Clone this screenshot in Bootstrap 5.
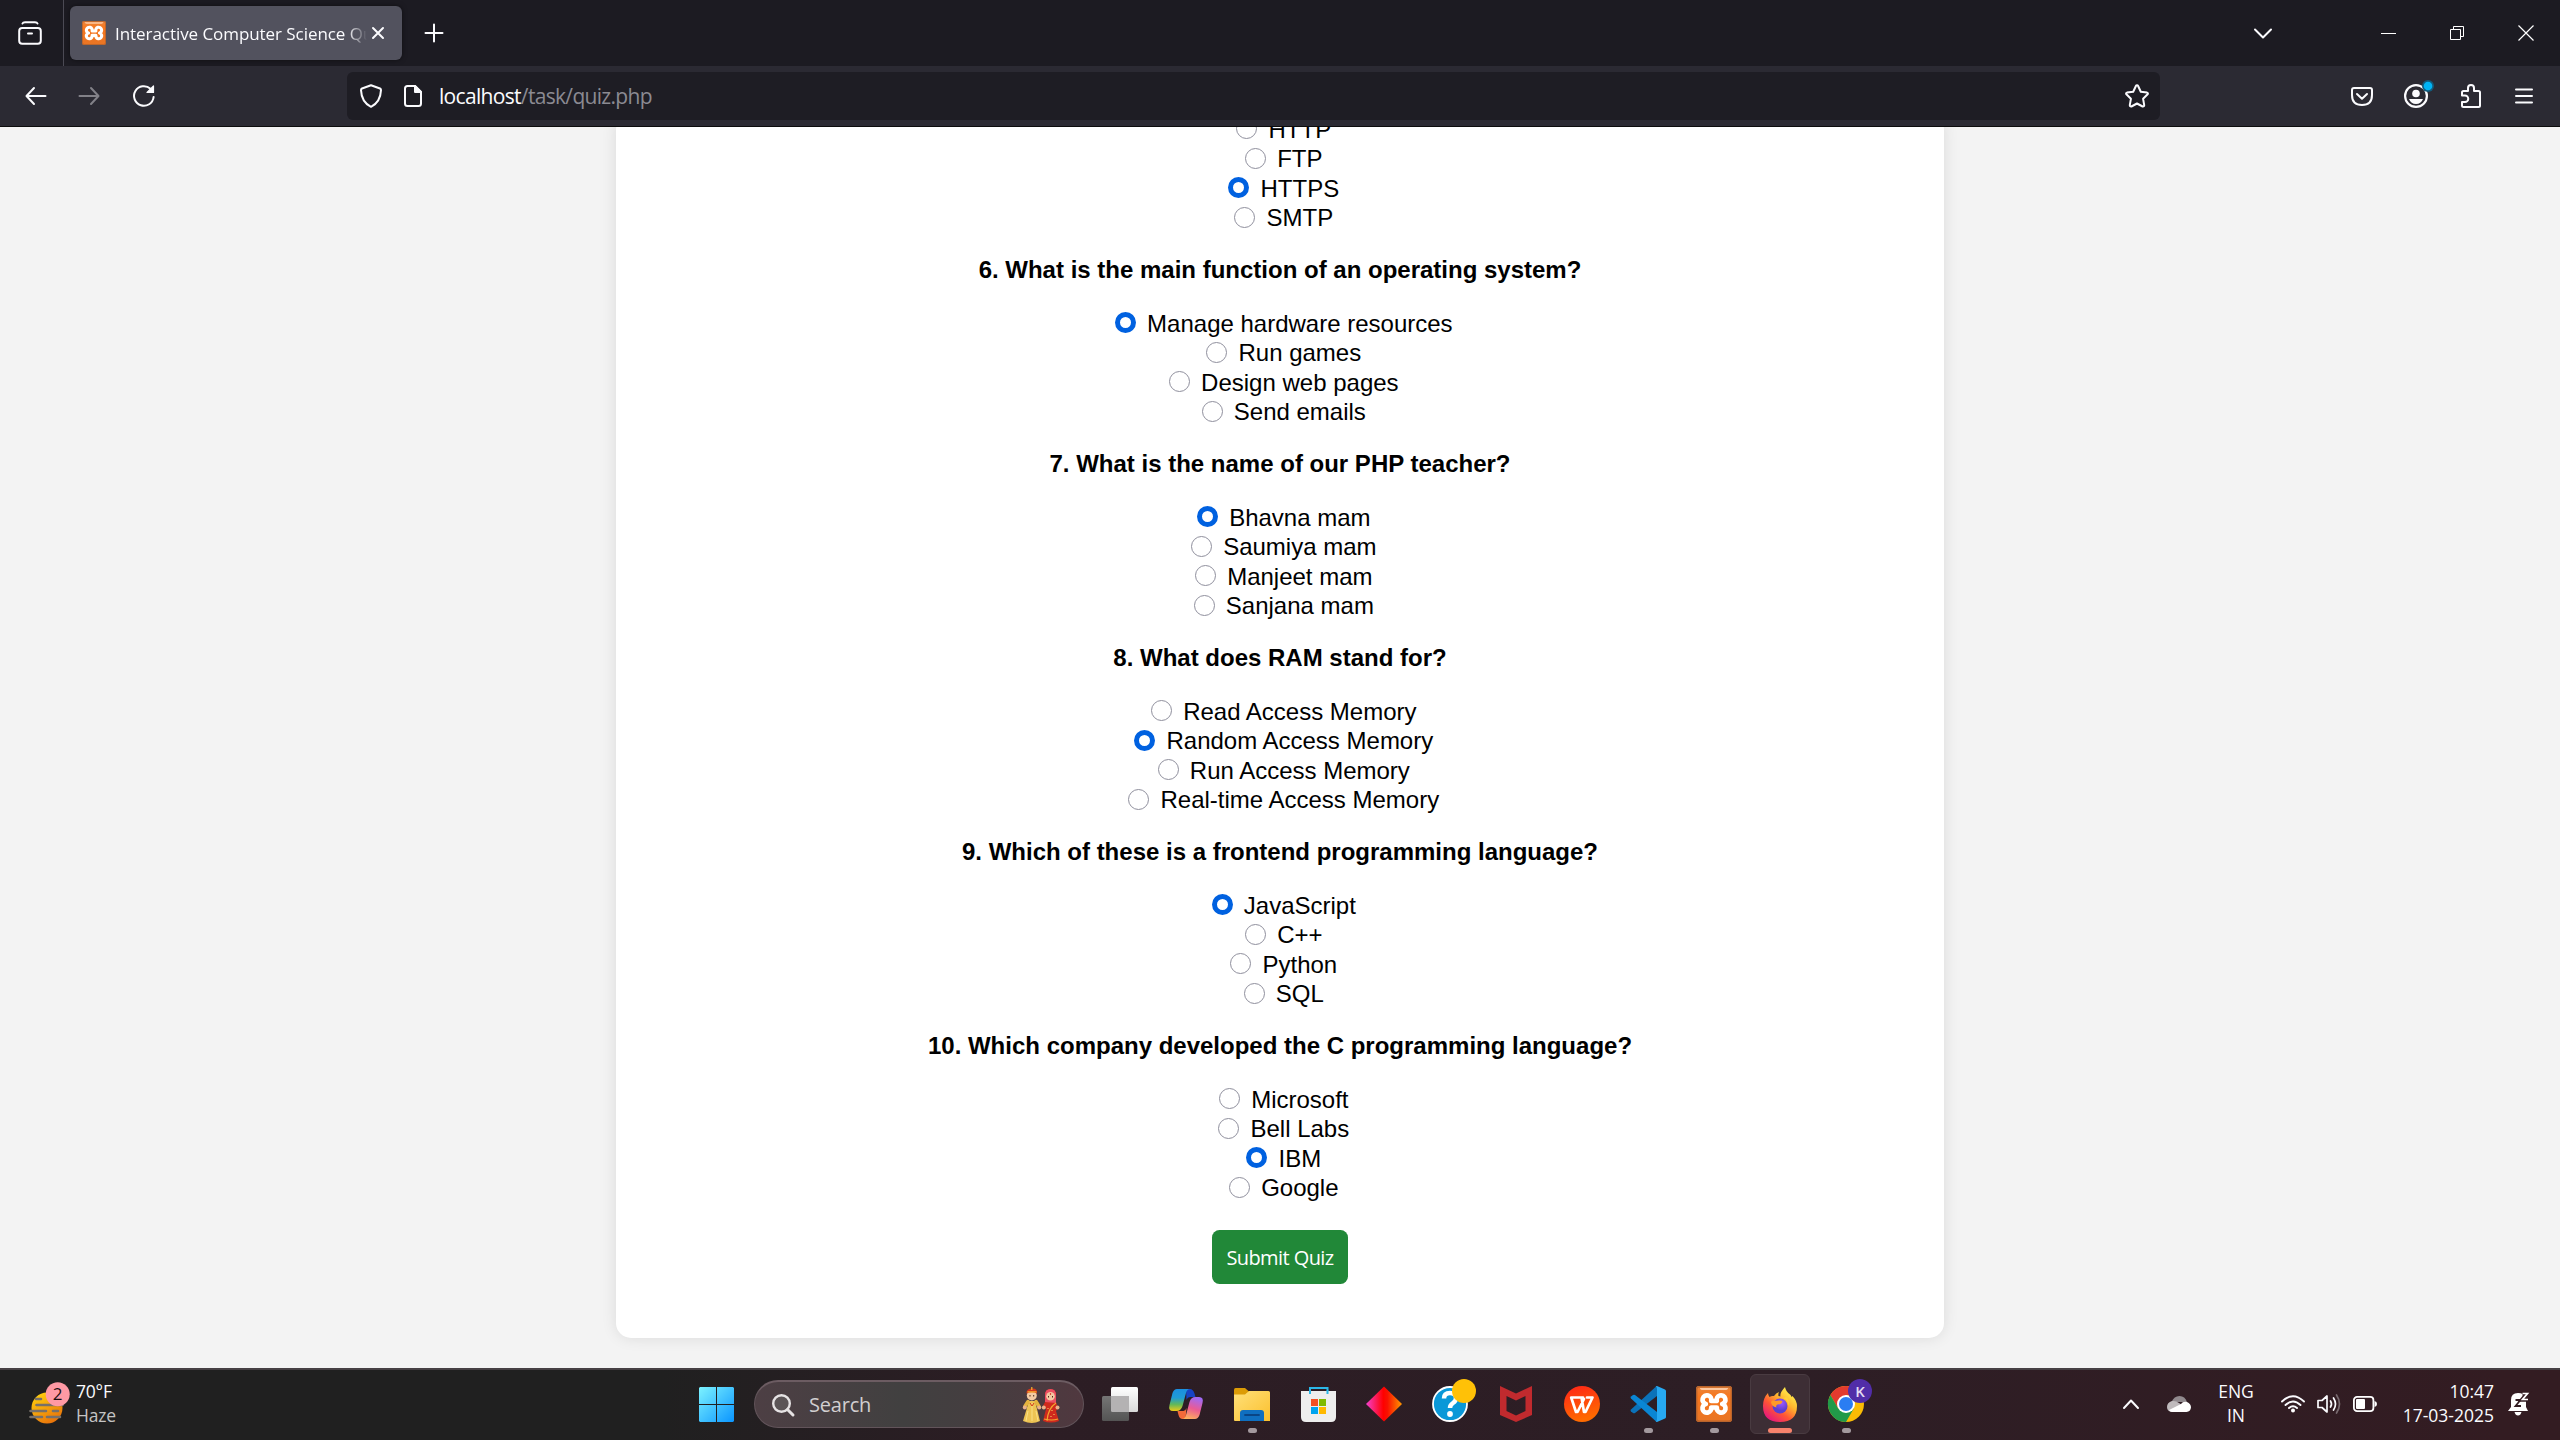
<!DOCTYPE html>
<html lang="en">
<head>
<meta charset="utf-8">
<title>Interactive Computer Science Quiz</title>
<link href="https://cdn.jsdelivr.net/npm/bootstrap@5.3.0/dist/css/bootstrap.min.css" rel="stylesheet">
<style>
  html, body { height: 100%; }
  body { font-family: "Open Sans", "Noto Sans", sans-serif; overflow: hidden; color: #fbfbfe; background: #f3f3f3; }
  svg { display: block; flex: none; overflow: visible; }
  .line-icon { fill: none; stroke: #fbfbfe; stroke-width: 2; stroke-linecap: round; stroke-linejoin: round; }

  /* browser chrome */
  .tab-strip { height: 66px; background: #1c1b22; }
  .view-cell { width: 64px; border-right: 1px solid #4b4a54; padding-left: 18px; }
  .browser-tab { width: 332px; height: 54px; margin-left: 6px; padding: 0 17px 0 12px; border-radius: 6px; background: #52525e; box-shadow: 0 0 5px rgba(0,0,0,.5); }
  .tab-title { width: 252px; margin-left: 9px; margin-right: 5px; padding-top: 1px; font-size: 17px; letter-spacing: -.06px; overflow: hidden; white-space: nowrap;
    -webkit-mask-image: linear-gradient(90deg, #000 232px, transparent 252px); mask-image: linear-gradient(90deg, #000 232px, transparent 252px); }
  .plus-sign { margin-left: 23px; }
  .window-controls { padding-right: 26px; }
  .tool-row { height: 61px; background: #2b2a33; border-bottom: 1px solid #0c0c0d; padding-left: 25px; padding-right: 27px; }
  .nav-icons { width: 322px; gap: 33px; }
  .url-box { width: 1813px; height: 48px; border-radius: 6px; background: #1e1d24; padding: 0 11px 0 13px; }
  .url-text { margin-left: 17px; padding-top: 2px; font-size: 21px; letter-spacing: -.68px; color: #8b8a92; white-space: nowrap; }
  .url-text span { color: #fbfbfe; }

  /* quiz page */
  .page-view { height: 1241px; overflow: hidden; background: #f3f3f3; }
  .quiz-box { width: 1328px; margin-bottom: 30px; padding-bottom: 54px; background: #fff; border-radius: 15px; box-shadow: 0 0 15px rgba(0,0,0,.1); color: #000; font: 24px/28px "Liberation Sans", Arial, sans-serif; }
  .question { margin: 23.3px 0 24.7px; height: 28px; font-weight: 700; white-space: nowrap; }
  .option { height: 29.5px; line-height: 29.5px; padding-left: 7.5px; white-space: nowrap; }
  .option input { appearance: none; width: 21px; height: 21px; margin: 0 11.2px 1.2px 0; border: 1.5px solid #8f8f9d; border-radius: 50%; background: #fff; flex: none; }
  .option input:checked { border: 5px solid #0061e0; }
  .submit-btn { width: 136px; height: 54px; margin-top: 27.3px; padding: 0; border: 0; border-radius: 7.5px; background: #218838; color: #fff; font: 20px "Open Sans", sans-serif; letter-spacing: -.58px; }

  /* taskbar */
  .taskbar { height: 72px; padding-bottom: 2px; border-top: 2px solid #464044; background: linear-gradient(90deg, #202020 0, #202020 660px, #2c1d24 1000px, #2d1e25 1800px, #331c22 2500px); display: grid; grid-template-columns: 699px 1183px 1fr; }
  .taskbar .tray-text { font-size: 17.5px; line-height: 24px; white-space: nowrap; }
  .temp-lines, .lang, .clock { margin-top: -2px; }
  .weather { padding-left: 29px; }
  .weather .temp-lines { margin-left: 5px; letter-spacing: -.2px; }
  .temp-lines .dim { color: #c4c4c4; }
  .search-pill { flex: none; width: 330px; height: 48px; margin-left: 20px; margin-right: 6px; border-radius: 24px; padding: 0 23px 0 17px; border: 1px solid #62545a; border-top: 2px solid #6c5c62; background: linear-gradient(90deg, #4d3f44, #414040 45%, #443e40 65%, #50383f); font-size: 20px; letter-spacing: -.2px; color: #d2cfd0; }
  .app-cell { width: 60px; height: 60px; margin-right: 6px; border-radius: 6px; position: relative; flex: none; }
  .app-cell.current { background: #3d2e35; border: 1px solid #493b41; }
  .app-cell.running::after { content: ""; position: absolute; left: 50%; bottom: 1px; width: 9px; height: 5px; margin-left: -4.5px; border-radius: 3px; background: #a3999e; }
  .app-cell.current::after { width: 24px; margin-left: -12px; bottom: 0; background: #f7826c; }
  .tray { padding-left: 241px; }
  .lang { width: 36px; margin-left: 27px; letter-spacing: -.1px; }
  .clock { width: 110px; margin-left: 7px; }
</style>
<script src="https://cdn.jsdelivr.net/npm/bootstrap@5.3.0/dist/js/bootstrap.bundle.min.js"></script>
</head>
<body class="d-flex flex-column">

<svg width="0" height="0" class="position-absolute">
  <defs>
    <linearGradient id="gXampp" x2="0" y2="1"><stop stop-color="#e8863f"/><stop offset=".3" stop-color="#f8761c"/><stop offset="1" stop-color="#e87525"/></linearGradient>
    <linearGradient id="gWin" x2="1" y2="1"><stop stop-color="#7df3ff"/><stop offset="1" stop-color="#0a95ff"/></linearGradient>
    <symbol id="xampp" viewBox="0 0 36 36">
      <rect width="36" height="36" rx="3" fill="url(#gXampp)"/><rect x=".7" y=".7" width="34.6" height="34.6" rx="2.5" fill="none" stroke="#b9642c" stroke-width="1.4"/>
      <path d="M4 2h28q0 2-3 2H7Q4 4 4 2z" fill="#ffc9a0"/>
      <path d="M15.200 15A4.400 4.400 0 1 0 9.800 18 4.400 4.400 0 1 0 15.200 21.500H20.800A4.400 4.400 0 1 0 26.200 18 4.400 4.400 0 1 0 20.800 15z" fill="none" stroke="#fff" stroke-width="4.700" stroke-linejoin="round"/>
    </symbol>
  </defs>
</svg>

<header class="flex-shrink-0">
  <div class="tab-strip d-flex align-items-center">
    <div class="view-cell h-100 d-flex align-items-center">
      <svg class="line-icon" width="24" height="24" viewBox="0 0 24 24"><rect x="1.200" y="7" width="21.600" height="15.800" rx="3"/><path d="M4.500 2.500Q5 1.200 7 1.200h10q2 0 2.500 1.300M10 12.500h4"/></svg>
    </div>
    <div class="browser-tab d-flex align-items-center">
      <svg width="24" height="24"><use href="#xampp"/></svg>
      <div class="tab-title">Interactive Computer Science Quiz</div>
      <svg class="line-icon" width="12" height="12" viewBox="0 0 12 12"><path d="M1 1l10 10M11 1L1 11"/></svg>
    </div>
    <svg class="line-icon plus-sign" width="18" height="18" viewBox="0 0 18 18"><path d="M9 .5v17M.5 9h17"/></svg>
    <div class="window-controls ms-auto d-flex align-items-center">
      <svg class="line-icon" width="18" height="11" viewBox="0 0 18 11" style="margin-right:109px"><path d="M1 1.500l8 8 8-8"/></svg>
      <svg width="15" height="1" style="margin-right:54px"><rect width="15" height="1" fill="#fff"/></svg>
      <svg width="14" height="14" viewBox="0 0 14 14" fill="none" stroke="#fff" style="margin-right:54px"><path d="M.5 3.500h10v10H.5zM3.500 3.500v-3h10v10h-3"/></svg>
      <svg width="16" height="16" viewBox="0 0 16 16" stroke="#fff" stroke-width="1.200"><path d="M.5.5l15 15M15.500.5l-15 15"/></svg>
    </div>
  </div>
  <div class="tool-row d-flex align-items-center">
    <div class="nav-icons d-flex align-items-center">
      <svg class="line-icon" width="21" height="18" viewBox="0 0 21 18"><path d="M9 1L1.500 9 9 17M2 9h18.500"/></svg>
      <svg class="line-icon" width="21" height="18" viewBox="0 0 21 18" opacity=".42"><path d="M12 1l7.500 8-7.500 8M19 9H.5"/></svg>
      <svg class="line-icon" width="22" height="22" viewBox="0 0 22 22"><path d="M17.500 3.800A9.800 9.800 0 1 0 20.600 12"/><path d="M20.500 1v6.500h-6.500z" fill="#fbfbfe" stroke-width="1.200"/></svg>
    </div>
    <div class="url-box d-flex align-items-center">
      <svg class="line-icon" width="22" height="24" viewBox="0 0 22 24"><path d="M11 1.200L20 4.500q1 .5 1 1.600Q20.500 18 11 22.800 1.500 18 1 6.100 1 5 2 4.500z"/></svg>
      <svg class="line-icon" width="18" height="22" viewBox="0 0 18 22" style="margin-left:22px"><path d="M11 1H3.500Q1 1 1 3.500v15Q1 21 3.500 21h11q2.500 0 2.500-2.500V7z"/><path d="M11 1v6h6z" fill="#fbfbfe"/></svg>
      <div class="url-text"><span>localhost</span>/task/quiz.php</div>
      <svg class="line-icon ms-auto" width="24" height="24" viewBox="0 0 24 24"><path d="M12 1.200q.8 0 1.100.8l2.700 5.700 6.200.9q1.500.5.600 1.700L18.100 14.800l1.100 6.400q0 1.600-1.600 1.300L12 19.500l-5.600 3q-1.600.3-1.600-1.300l1.100-6.400L1.400 10.300q-.9-1.200.6-1.700l6.200-.9L10.900 2q.3-.8 1.100-.8z"/></svg>
    </div>
    <div class="ms-auto d-flex align-items-center">
      <svg class="line-icon" width="22" height="19" viewBox="0 0 22 19" style="margin-right:31px"><path d="M3 1h16q2 0 2 2v5q0 10-10 10T1 8V3q0-2 2-2zM6 7l5 4.800L16 7"/></svg>
      <svg width="24" height="24" viewBox="0 0 24 24" style="margin-right:33px"><circle cx="12" cy="12" r="10.900" fill="none" stroke="#fbfbfe" stroke-width="2.200"/><circle cx="12" cy="9.500" r="3.800" fill="#fbfbfe"/><path d="M5 15h14q-2 5-7 5t-7-5z" fill="#fbfbfe"/><circle cx="24" cy="2" r="6" fill="#125b7c"/><circle cx="24" cy="2" r="4.300" fill="#00b3f4"/></svg>
      <svg class="line-icon" width="20" height="24" viewBox="0 0 20 24" style="margin-right:34px"><path d="M1 11V8.500Q1 7 2.500 7H7V4a3 3 0 0 1 6 0v3h4.500Q19 7 19 8.500v13q0 1.500-1.500 1.500h-15Q1 23 1 21.500V18h3a3.200 3.200 0 0 0 0-6.500H1z"/></svg>
      <svg class="line-icon" width="18" height="16" viewBox="0 0 18 16"><path d="M1 1.500h16M1 8h16M1 14.500h16"/></svg>
    </div>
  </div>
</header>

<main class="page-view d-flex flex-column justify-content-end align-items-center flex-shrink-0">
  <form class="quiz-box d-flex flex-column align-items-center flex-shrink-0" id="quiz"></form>
</main>

<footer class="taskbar flex-shrink-0">
  <div class="weather d-flex align-items-center">
    <svg width="42" height="42" viewBox="0 0 42 42"><defs><linearGradient id="gSun" x1=".2" y1=".1" x2=".7" y2="1"><stop stop-color="#fdc90c"/><stop offset="1" stop-color="#e8700a"/></linearGradient></defs>
      <circle cx="18" cy="25" r="15.500" fill="url(#gSun)"/><path d="M7 16h5M7.500 22h26M1.500 28H17M24 28h5M1.500 34H13M18 34h13" stroke="#77706a" stroke-width="2.600" stroke-linecap="round"/>
      <circle cx="28.700" cy="11.300" r="12" fill="#ff99a4"/><text x="28.700" y="17.300" font-size="17" text-anchor="middle" fill="#1b1013">2</text></svg>
    <div class="temp-lines tray-text">70°F<br><span class="dim">Haze</span></div>
  </div>
  <div class="d-flex align-items-center">
    <svg width="35" height="35" viewBox="0 0 35 35"><path d="M1 0h16v17H0V1zM18 0h16l1 1v16H18zM0 18h17v17H1l-1-1zM18 18h17v16l-1 1H18z" fill="url(#gWin)"/></svg>
    <div class="search-pill d-flex align-items-center">
      <svg width="22" height="22" viewBox="0 0 22 22" fill="none" stroke="#e6e3e4" stroke-width="2.400" stroke-linecap="round"><circle cx="9.500" cy="9.500" r="8.300" fill="#5b5456"/><path d="M15.500 15.500l5.500 5.500" stroke-width="3"/></svg>
      <span style="margin-left:15px">Search</span>
      <svg class="ms-auto" width="37" height="36" viewBox="0 0 37 36">
        <path d="M6 14h6l5 20q-8 4-17 0z" fill="#edc353"/><path d="M5 14.500l-3.200 5M13 14.500l3 5" stroke="#e5b33e" stroke-width="3.500" stroke-linecap="round"/><path d="M9 16v18M5 24L3 34M13 24l2 10" stroke="#f9df86"/><circle cx="1.800" cy="20.500" r="2" fill="#eab28a"/><circle cx="16.200" cy="20.500" r="2" fill="#eab28a"/>
        <circle cx="8.800" cy="8.500" r="5" fill="#f3c9a2"/><path d="M3.500 6.500Q3 2 8.800 1.500T14 6.500Q9 4 3.500 6.500z" fill="#d4351c"/><path d="M4.500 4.800h9M8.800 0v3" stroke="#f6b32e" stroke-width="1.200"/><path d="M7 8v1.500M10.700 8v1.500" stroke="#4b2a1c"/><path d="M7 16l2 3 2-3" stroke="#d4351c" fill="none"/>
        <path d="M22 15V8q0-6 5.500-6T33 8v7l2 6-2 3 3 10q-8 3-16 0l3-12-3-3z" fill="#cf2a1d"/><path d="M22 15V8q0-6 5.500-6T33 8v8z" fill="#ec4f61"/><circle cx="27.500" cy="9.200" r="4.300" fill="#f3c9a2"/><path d="M25.500 9v1.500M29.500 9v1.500" stroke="#4b2a1c"/><circle cx="27.500" cy="7" r=".7" fill="#c00"/>
        <circle cx="20.800" cy="20.500" r="2" fill="#eab28a"/><circle cx="34.500" cy="20.500" r="2" fill="#eab28a"/><path d="M33 16q-8 5-9 18M21 32q8 2 14 0" stroke="#f3a72f" stroke-width="1.200" fill="none"/><path d="M29 23v1M31 27v1M28 29v1M25 21v1" stroke="#ffd966"/></svg>
    </div>
    <div class="app-cell d-flex align-items-center justify-content-center"><svg width="36" height="34" viewBox="0 0 36 34"><defs><linearGradient id="gTv" x2="0" y2="1"><stop stop-color="#fff"/><stop offset="1" stop-color="#d9d9d9"/></linearGradient><linearGradient id="gTd" x2="0" y2="1"><stop stop-color="#757575"/><stop offset="1" stop-color="#545454"/></linearGradient></defs><rect x="9" width="27" height="25" rx="1.500" fill="url(#gTv)"/><rect y="9" width="27" height="25" rx="1.500" fill="url(#gTd)"/><path d="M9 9h18v16H10.500Q9 25 9 23.500z" fill="#b4b2b3"/></svg></div>
    <div class="app-cell d-flex align-items-center justify-content-center"><svg width="34" height="30" viewBox="0 0 34 30"><defs><linearGradient id="gC1" x2="0" y2="1"><stop stop-color="#1b8fe0"/><stop offset=".4" stop-color="#1f9bd6"/><stop offset=".7" stop-color="#62b85a"/><stop offset="1" stop-color="#ecca18"/></linearGradient><linearGradient id="gC2" x1=".6" x2=".3" y2="1"><stop stop-color="#a06af5"/><stop offset=".5" stop-color="#ea5b94"/><stop offset="1" stop-color="#fdb15c"/></linearGradient></defs>
      <path d="M17 0h4q3 0 4.500 4.500L26.500 8h-5q-3 0-4 3z" fill="#1743c4"/><path d="M8.500 22h6q2 0 3-3l-1 11h-3q-3 0-4-4z" fill="#f26a3a"/><path d="M8 0h13q-3 0-4 4l-3.500 13q-1.500 5-6 5H4q-5 0-3.500-6L3.500 4Q5 0 8 0z" fill="url(#gC1)"/><path d="M26 30H13q3 0 4-4l3.500-13q1.500-5 6-5H30q5 0 3.500 6L30.500 26Q29 30 26 30z" fill="url(#gC2)"/></svg></div>
    <div class="app-cell running d-flex align-items-center justify-content-center"><svg width="36" height="33" viewBox="0 0 36 33"><defs><linearGradient id="gFo" x2="1" y2="1"><stop stop-color="#ffe07a"/><stop offset="1" stop-color="#fbc02d"/></linearGradient></defs><path d="M0 2Q0 0 1.500 0H11l4 3.500L10 12H0z" fill="#dc9b06"/><path d="M0 6.500h11L15 3h19.500Q36 3 36 4.500V33H1q-1 0-1-1z" fill="url(#gFo)"/><path d="M6 33v-8q0-3 3-3h18q3 0 3 3v8z" fill="#0f6fc0"/><path d="M11 27h14" stroke="#0a4585" stroke-width="1.800" stroke-linecap="round"/></svg></div>
    <div class="app-cell d-flex align-items-center justify-content-center"><svg width="35" height="35" viewBox="0 0 35 35"><path d="M9 7V1h17.500v6" fill="none" stroke="#2bb7e8" stroke-width="2"/><path d="M0 4h35v26q0 5-5 5H5q-5 0-5-5z" fill="#eee"/><path d="M9 3.500v3.500M26.500 3.500v3.500" stroke="#2bb7e8" stroke-width="2"/><path d="M10 12h7v7h-7z" fill="#f25022"/><path d="M18 12h7v7h-7z" fill="#7fba00"/><path d="M10 20h7v7h-7z" fill="#00a4ef"/><path d="M18 20h7v7h-7z" fill="#ffb900"/></svg></div>
    <div class="app-cell d-flex align-items-center justify-content-center"><svg width="36" height="36" viewBox="0 0 36 36"><defs><linearGradient id="gDi"><stop stop-color="#f540d0"/><stop offset=".48" stop-color="#f00"/><stop offset=".6" stop-color="#f81200"/><stop offset="1" stop-color="#ff9800"/></linearGradient></defs><path d="M18 .5L36 18 18 35.500 0 18z" fill="url(#gDi)"/></svg></div>
    <div class="app-cell d-flex align-items-center justify-content-center"><svg width="36" height="36" viewBox="0 0 36 36"><circle cx="18" cy="18" r="17" fill="#0a98d8" stroke="#fff" stroke-width="1.800"/><path d="M12 12.500q0-5.500 6-5.500t6 5q0 3-3 5t-3 5" fill="none" stroke="#fff" stroke-width="4.500"/><circle cx="18" cy="28" r="2.900" fill="#fff"/><circle cx="32" cy="5" r="12" fill="#ffc107"/></svg></div>
    <div class="app-cell d-flex align-items-center justify-content-center"><svg width="32" height="36" viewBox="0 0 32 36"><path d="M0 0l16 7.500L32 0v29l-16 7-16-7zM6.500 10v15l9.500 4.500 9.500-4.500V10L16 14.500z" fill="#c12a2e" fill-rule="evenodd"/></svg></div>
    <div class="app-cell d-flex align-items-center justify-content-center"><svg width="36" height="36" viewBox="0 0 36 36"><defs><linearGradient id="gWp" x2=".3" y2="1"><stop stop-color="#ff2318"/><stop offset="1" stop-color="#ff6a00"/></linearGradient></defs><circle cx="18" cy="18" r="18" fill="url(#gWp)"/><path d="M19 11.500H7.200L12 26h1.500l6.500-13M14 11.500h3.500L20 26h1.500L28.500 11.500H23" fill="none" stroke="#fff" stroke-width="2.700" stroke-linejoin="round" stroke-linecap="round"/></svg></div>
    <div class="app-cell running d-flex align-items-center justify-content-center"><svg width="36" height="36" viewBox="0 0 36 36"><path d="M1 23.500L25 1.500l2-1.500v10L5 27q-1 .6-2 0l-2-1.500q-1-1 0-2z" fill="#0b72b9"/><path d="M1 12.500q-1-1 0-2L3 9q1-.6 2 0l22 17v10l-2-1.500z" fill="#0a86d4"/><path d="M25.500 35.700Q27 35.500 27 33V3q0-2.500-1.500-2.700L27 0l8 3.500q1 .5 1 1.500v26q0 1-1 1.500L27 36z" fill="#27a9f2"/></svg></div>
    <div class="app-cell running d-flex align-items-center justify-content-center"><svg width="36" height="36"><use href="#xampp"/></svg></div>
    <div class="app-cell running current d-flex align-items-center justify-content-center"><svg width="34" height="35" viewBox="0 0 34 35"><defs><linearGradient id="gFx" x1=".85" y1=".1" x2=".2" y2=".95"><stop stop-color="#fff44f"/><stop offset=".35" stop-color="#ffb52e"/><stop offset=".65" stop-color="#ff5634"/><stop offset="1" stop-color="#e5177c"/></linearGradient><radialGradient id="gFp" cx=".6" cy=".3"><stop stop-color="#a259ff"/><stop offset="1" stop-color="#5b3fd0"/></radialGradient></defs>
      <path d="M5 6q0 2 1.500 4Q8.500 8.500 11 9q2-3 5-4-1 2-.5 4l2 .5Q16.500 6 22 0q1 5 5 7.500 1 .8 1.500 2.500l1-1Q34 14 34 19q0 16-17 16T0 19Q0 11 5 6z" fill="url(#gFx)"/><circle cx="17" cy="19" r="7.500" fill="url(#gFp)"/><path d="M9.500 13.500q3 .5 6 0t4 1q-1 3-5 3-2 1-1 3-5-1-5.500-5.500z" fill="#ff9a26"/><path d="M20 11q5 1 5.500 8 1-5-1.500-9z" fill="#ffd23a"/></svg></div>
    <div class="app-cell running d-flex align-items-center justify-content-center"><svg width="36" height="36" viewBox="0 0 36 36"><circle cx="18" cy="18" r="18" fill="#fbbc05"/><path d="M2.400 9a18 18 0 0 1 31.200 0H18l-7.800 13.500z" fill="#e33b2e"/><path d="M2.400 9a18 18 0 0 0 15.600 27l7.800-13.500H10.200z" fill="#219a49"/><circle cx="18" cy="18" r="9" fill="#fff"/><circle cx="18" cy="18" r="7" fill="#2a7df2"/><circle cx="32" cy="5" r="12" fill="#512da8"/><text x="32" y="10.500" font-size="15" font-weight="600" fill="#e3dcf3" text-anchor="middle">K</text></svg></div>
  </div>
  <div class="tray d-flex align-items-center tray-text">
    <svg class="line-icon" width="16" height="10" viewBox="0 0 16 10"><path d="M1 9l7-7.500L15 9"/></svg>
    <svg width="24" height="16" viewBox="0 0 24 16" style="margin-left:28px"><path d="M4.500 6Q7 0 12.500 0T20 6z" fill="#918a8e"/><path d="M5 16q-5-.5-5-5t5-6q4-.5 7 2l6 4-8 5z" fill="#bfbabc"/><path d="M2 14l12-6q2-3 6-2 4 1.500 4 5.500-.5 4-4.500 4.500H5q-2 0-3-2z" fill="#fff"/></svg>
    <div class="lang text-center">ENG<br>IN</div>
    <svg class="line-icon" width="24" height="18" viewBox="0 0 24 18" style="margin-left:27px"><path d="M1 6.500q11-10.500 22 0M4.500 10q7.500-7 15 0M8 13q4-3.500 8 0" stroke-width="1.900"/><circle cx="12" cy="15.500" r="2" fill="#fff" stroke="none"/></svg>
    <svg class="line-icon" width="24" height="20" viewBox="0 0 24 20" style="margin-left:12px"><path d="M1 6.500h4L10 2v16l-5-4.500H1z" stroke-width="1.700"/><path d="M13.500 7q2 3 0 6M16.500 4q4 6 0 12" stroke-width="1.700"/><path d="M19.500 1q6 9 0 18" stroke-width="1.700" opacity=".35"/></svg>
    <svg width="24" height="16" viewBox="0 0 24 16" style="margin-left:12px"><rect x=".9" y=".9" width="19.500" height="14.200" rx="3.200" fill="none" stroke="#fff" stroke-width="1.800"/><rect x="3" y="3" width="9" height="10" rx="1" fill="#fff"/><path d="M21.500 5q2.500.5 2.500 3t-2.500 3z" fill="#fff"/></svg>
    <div class="clock text-end">10:47<br>17-03-2025</div>
    <svg width="22" height="24" viewBox="0 0 22 24" style="margin-left:14px"><path d="M10 1Q3 1 3 8v7l-3 4h20l-2-4V6q-2-5-8-5z" fill="#fff"/><path d="M6.500 20h7q-1 3.500-3.500 3.500T6.500 20z" fill="#fff"/><path d="M14.500 1.500h5l-5 6h5.500" fill="none" stroke="#331c22" stroke-width="4.500"/><path d="M7.500 8h5l-5 6H13" fill="none" stroke="#331c22" stroke-width="1.800"/><path d="M14.500 1.500h5l-5 6h5.500" fill="none" stroke="#fff" stroke-width="1.700"/></svg>
  </div>
</footer>

<script>
  // [question, options, index of the selected option]
  const quiz = [
    ["5. Which protocol is used for secure web browsing?", ["HTTP", "FTP", "HTTPS", "SMTP"], 2],
    ["6. What is the main function of an operating system?", ["Manage hardware resources", "Run games", "Design web pages", "Send emails"], 0],
    ["7. What is the name of our PHP teacher?", ["Bhavna mam", "Saumiya mam", "Manjeet mam", "Sanjana mam"], 0],
    ["8. What does RAM stand for?", ["Read Access Memory", "Random Access Memory", "Run Access Memory", "Real-time Access Memory"], 1],
    ["9. Which of these is a frontend programming language?", ["JavaScript", "C++", "Python", "SQL"], 0],
    ["10. Which company developed the C programming language?", ["Microsoft", "Bell Labs", "IBM", "Google"], 2]
  ];
  document.getElementById("quiz").innerHTML = quiz.map(([q, opts, picked], i) =>
    (i ? `<p class="question">${q}</p>` : "") +
    opts.map((o, k) => `<label class="option d-flex align-items-center"><input type="radio" name="q${i}"${k === picked ? " checked" : ""}>${o}</label>`).join("")
  ).join("") + '<button type="button" class="btn submit-btn">Submit Quiz</button>';
</script>
</body>
</html>
